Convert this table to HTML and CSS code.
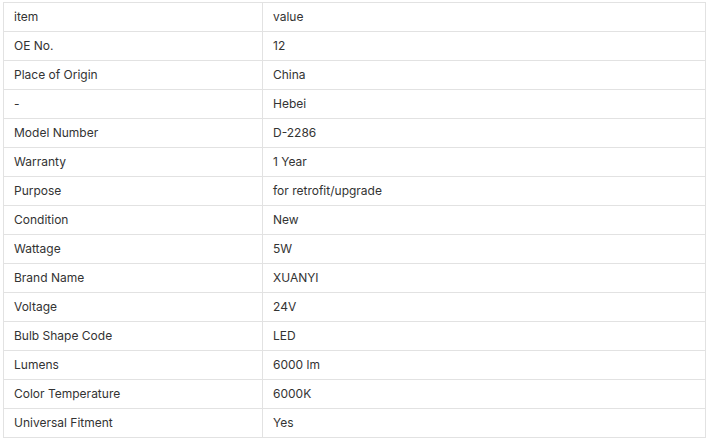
FILE: index.html
```html
<!DOCTYPE html>
<html>
<head>
<meta charset="utf-8">
<link rel="stylesheet" href="styles.css">
</head>
<body>
<div class="wrap">
<table class="spec">
<tr><td class="k">item</td><td>value</td></tr>
<tr><td class="k">OE No.</td><td>12</td></tr>
<tr><td class="k">Place of Origin</td><td>China</td></tr>
<tr><td class="k">-</td><td>Hebei</td></tr>
<tr><td class="k">Model Number</td><td>D-2286</td></tr>
<tr><td class="k">Warranty</td><td>1 Year</td></tr>
<tr><td class="k">Purpose</td><td>for retrofit/upgrade</td></tr>
<tr><td class="k">Condition</td><td>New</td></tr>
<tr><td class="k">Wattage</td><td>5W</td></tr>
<tr><td class="k">Brand Name</td><td>XUANYI</td></tr>
<tr><td class="k">Voltage</td><td>24V</td></tr>
<tr><td class="k">Bulb Shape Code</td><td>LED</td></tr>
<tr><td class="k">Lumens</td><td>6000 lm</td></tr>
<tr><td class="k">Color Temperature</td><td>6000K</td></tr>
<tr><td class="k">Universal Fitment</td><td>Yes</td></tr>
</table>
</div>
</body>
</html>
```
FILE: styles.css
```css
html, body {
  margin: 0;
  padding: 0;
  background: #ffffff;
}
.wrap {
  padding: 2px 0 0 3px;
}
.spec {
  border-collapse: collapse;
  width: 703px;
  font-family: Inter, "Liberation Sans", sans-serif;
  font-size: 12px;
  color: #333333;
}
.spec td {
  border: 1px solid #e2e2e2;
  padding: 0 0 2px 10px;
  box-sizing: border-box;
  height: 29px;
  vertical-align: middle;
}
.spec td.k {
  width: 259px;
}
```
